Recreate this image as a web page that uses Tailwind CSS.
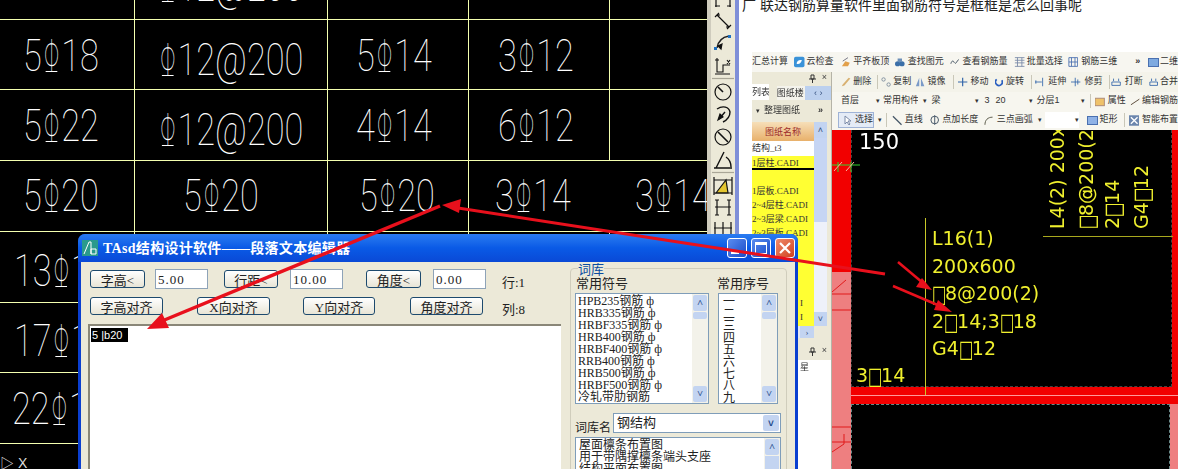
<!DOCTYPE html>
<html lang="zh">
  <head>
    <meta charset="UTF-8" />
    <meta name="viewport" content="width=device-width, initial-scale=1.0" />
    <title>TAsd</title>
    <script src="https://cdn.jsdelivr.net/npm/@tailwindcss/browser@4"></script>
  </head>
  <body class="bg-white">
    <div class="relative w-[1178px] h-[469px] overflow-hidden flex font-['Liberation_Sans','Noto_Sans_CJK_SC',sans-serif]">
      <!-- cad table -->
      <div id="cad" class="w-[707px] h-full shrink-0 overflow-hidden grid gap-px bg-[#f4ffb0] grid-cols-[134px_192px_140px_140px_97px] grid-rows-[19px_69px_70px_70px_70px_69px_70px_25px]"></div>

      <!-- dimension toolbar -->
      <div class="w-[28px] shrink-0 h-full bg-[#ece9d8] border-l-4 border-[#cfccbe] flex flex-col items-center text-black">
        <svg class="w-[24px] h-[240px]" viewBox="0 0 24 240" fill="none" stroke="#111" stroke-width="1.2">
          <path d="M5 0v7M19 0v7M4 6h5M16 6h4" />
          <path d="M4 17l4-4M16 29l4-4M6 15l12 12M6 15l3 0M18 27l-3 0" />
          <path d="M6 48c1-7 6-11 12-12" stroke="#222" stroke-width="1.5" /><rect x="3" y="47" width="3" height="3" fill="#1d6fc0" stroke="none" /><rect x="17" y="35" width="3" height="3" fill="#1d6fc0" stroke="none" /><path d="M11 44l-1 5-3-3z" fill="#111" />
          <path d="M6 58v14h6v-7h7M4 60h4M16 60l3 4M19 60l-3 4M4 74h15" stroke-width="1.1" />
          <path d="M1 78.5h22" stroke="#a9a697" />
          <circle cx="12" cy="92" r="8" /><path d="M12 92l-5-5" stroke-width="1.6" />
          <path d="M6 109c6-4 12-2 13 3 0 4-3 8-7 10M14 112l-6 7" stroke-width="1.4" /><path d="M7 120l2-6 3 3z" fill="#111" />
          <circle cx="12" cy="137" r="8" /><path d="M7 132l10 10" stroke-width="1.6" />
          <path d="M3 168h18M5 168l8-16M15 157c3 2 5 6 5 10" stroke-width="1.4" />
          <path d="M1 172.5h22" stroke="#a9a697" />
          <path d="M5 193l10-13 2 13z" fill="#e3c52f" /><path d="M3 177v18M21 177v18M3 180h18M3 193h18" />
          <path d="M6 200v15M18 200v15M4 207h16M4 200h4M16 200h4M4 215h4M16 215h4" />
          <path d="M4 222v14M12 222v14M20 222v14M3 228h18" />
        </svg>
      </div>
      <div class="w-[4px] shrink-0 h-full bg-[#7f8fd8]"></div>

      <!-- forum post + software screenshot -->
      <div class="flex-1 h-full flex flex-col min-w-0">
        <div class="h-[54px] shrink-0 pl-[3px] text-[14px] leading-[14px] text-[#222] -mt-[2px] whitespace-nowrap">广&nbsp;联达钢筋算量软件里面钢筋符号是框框是怎么回事呢</div>
        <div class="flex-1 ml-[13px] flex flex-col min-h-0 blur-[0.3px] text-[9px] text-[#333]">
          <!-- top toolbar -->
          <div class="h-[20px] shrink-0 bg-[#f7f6f0] flex items-center whitespace-nowrap overflow-hidden">
            <span>汇总计算</span>
            <svg class="ml-[6px] w-[12px] h-[12px]" viewBox="0 0 12 12"><rect width="12" height="12" rx="2" fill="#3a92d8" /><path d="M3 8c0-3 3-5 6-4-1 3-3 5-6 4z" fill="#fff" /></svg><span class="ml-[2px]">云检查</span>
            <svg class="ml-[7px] w-[11px] h-[12px]" viewBox="0 0 11 12"><path d="M1 11l4-6 5 2-2 4z" fill="#e2a04a" /><path d="M2 5l6-4" stroke="#667" /></svg><span class="ml-[3px]">平齐板顶</span>
            <svg class="ml-[6px] w-[11px] h-[12px]" viewBox="0 0 11 12"><circle cx="3" cy="8" r="3" fill="#3b6fa8" /><circle cx="8" cy="8" r="3" fill="#3b6fa8" /><path d="M3 2h5v4H3z" fill="#6b8fb8" /></svg><span class="ml-[3px]">查找图元</span>
            <svg class="ml-[6px] w-[11px] h-[8px]" viewBox="0 0 11 8" fill="none" stroke="#345"><path d="M1 6c1-4 3-4 4-1M6 6l4-5" /></svg><span class="ml-[3px]">查看钢筋量</span>
            <svg class="ml-[7px] w-[13px] h-[12px]" viewBox="0 0 13 12" fill="none" stroke="#7a8aa8"><path d="M1 1h11M1 4h11M1 7h11M1 11h11M4 1v10M9 1v10" /></svg><span class="ml-[1px]">批量选择</span>
            <svg class="ml-[5px] w-[12px] h-[12px]" viewBox="0 0 12 12" fill="none" stroke="#4a6fb0"><path d="M1 1h10v10H1zM4 1v10M8 1v10M1 6h10" /></svg><span class="ml-[3px]">钢筋三维</span>
            <span class="ml-[18px] font-bold">»</span>
            <span class="ml-[8px] w-[12px] h-[9px] bg-[#7eaae0] border border-[#4a70b0]"></span><span class="ml-[1px]">二维</span>
          </div>
          <div class="flex-1 flex min-h-0">
            <!-- drawing list panel -->
            <div class="w-[80px] shrink-0 h-full flex flex-col bg-[#ece9d8] border-r border-[#b5b3a7] relative">
              <div class="h-[12px] shrink-0 flex items-center justify-end gap-[6px] pr-[4px] text-[#444]">
                <svg class="w-[7px] h-[9px]" viewBox="0 0 7 9" fill="none" stroke="#333"><path d="M2 1h3v4H2zM0 5h7M3.500 5v4" /></svg><span>×</span>
              </div>
              <div class="h-[16px] shrink-0 flex items-end whitespace-nowrap">
                <span class="w-[17px] h-[16px] bg-white leading-[16px] overflow-hidden">列表</span>
                <span class="ml-[8px] w-[29px] h-[14px] bg-[#f4f3ec] leading-[14px] overflow-hidden">图纸楼</span>
                <span class="w-[26px] h-[14px] bg-[#bcd0ee] text-center leading-[14px] text-[#35507f]">‹ ›</span>
              </div>
              <div class="h-[22px] shrink-0 flex items-center whitespace-nowrap">
                <span class="ml-[4px] text-[7px]">▾</span><span class="ml-[4px]">整理图纸</span><span class="ml-[18px] font-bold">»</span>
              </div>
              <div class="h-[216px] shrink-0 flex">
                <div class="w-[62px] shrink-0 flex flex-col text-[9px] font-['Liberation_Serif','Noto_Sans_CJK_SC',serif] whitespace-nowrap overflow-hidden">
                  <div class="h-[19px] shrink-0 bg-gradient-to-b from-[#f6dfb8] to-[#e8b06a] text-center leading-[19px] text-[#9c2b2b] font-['Noto_Sans_CJK_SC',sans-serif]">图纸名称</div>
                  <div class="h-[15px] shrink-0 bg-white leading-[15px]">结构_t3</div>
                  <div class="h-[14px] shrink-0 bg-[#ffff33] leading-[14px] border-b-2 border-black">1层柱.CADI</div>
                  <div class="h-[14px] shrink-0 bg-[#ffff33]"></div>
                  <div class="flex-1 bg-[#ffff33] leading-[14px]">
                    <div class="h-[14px]">1层板.CADI</div>
                    <div class="h-[14px]">2~4层柱.CADI</div>
                    <div class="h-[14px]">2~3层梁.CADI</div>
                    <div class="h-[14px]">2~3层板.CADI</div>
                    <div class="h-[56px]"></div>
                    <div class="h-[14px] pl-[48px]">I</div>
                    <div class="h-[14px] pl-[48px]">I</div>
                  </div>
                  <div class="h-[12px] shrink-0 bg-[#e4e8f4] flex justify-end"><span class="w-[14px] bg-[#c3d4f1] text-center text-[#35507f] leading-[12px]">›</span></div>
                </div>
                <div class="w-[13px] shrink-0 flex flex-col bg-[#eef1fa] h-[204px]">
                  <div class="h-[16px] bg-[#c3d4f1] text-center text-[#35507f] leading-[16px]">˄</div>
                  <div class="h-[84px] bg-[#c6d5f4]"></div>
                  <div class="flex-1"></div>
                  <div class="h-[14px] bg-[#c3d4f1] text-center text-[#35507f] leading-[14px]">˅</div>
                </div>
              </div>
              <div class="flex-1 min-h-0 pt-[4px]">
                <div class="h-[18px] flex items-center justify-end gap-[6px] pr-[4px] text-[#444]">
                  <svg class="w-[7px] h-[9px]" viewBox="0 0 7 9" fill="none" stroke="#333"><path d="M2 1h3v4H2zM0 5h7M3.500 5v4" /></svg><span>×</span>
                </div>
                <div class="h-full bg-white pl-[48px] leading-[14px]">星</div>
              </div>
            </div>
            <!-- main area -->
            <div class="flex-1 min-w-0 flex flex-col">
              <div class="h-[20px] shrink-0 bg-[#f4f3ea] flex items-center whitespace-nowrap overflow-hidden">
                <svg class="ml-[9px] w-[12px] h-[12px]" viewBox="0 0 12 12"><path d="M1 11l3-1 7-8-2-1-7 8z" fill="#d8b070" /></svg><span class="ml-[2px]">删除</span><span class="ml-[6px] w-px h-[14px] bg-[#c9c7b8]"></span>
                <svg class="ml-[3px] w-[12px] h-[12px]" viewBox="0 0 12 12" fill="none" stroke="#789"><circle cx="3" cy="3" r="2" /><circle cx="9" cy="9" r="2" /></svg><span class="ml-[2px]">复制</span>
                <svg class="ml-[4px] w-[12px] h-[12px]" viewBox="0 0 12 12" fill="#7a9ac8"><path d="M5 1v10H1zM7 1v10h4z" /></svg><span class="ml-[2px]">镜像</span><span class="ml-[8px] w-px h-[14px] bg-[#c9c7b8]"></span>
                <svg class="ml-[4px] w-[11px] h-[12px]" viewBox="0 0 11 12" fill="none" stroke="#36a" stroke-width="1.4"><path d="M5.500 1v10M0 6h11" /></svg><span class="ml-[3px]">移动</span>
                <svg class="ml-[6px] w-[10px] h-[12px]" viewBox="0 0 10 12" fill="none" stroke="#2a5fc0" stroke-width="2"><path d="M2 3a4 4 0 1 0 6 1" /></svg><span class="ml-[3px]">旋转</span><span class="ml-[7px] w-px h-[14px] bg-[#c9c7b8]"></span>
                <svg class="ml-[3px] w-[11px] h-[12px]" viewBox="0 0 11 12" fill="none" stroke="#36a"><path d="M0 6h8M9 1v10M1 4v4" /></svg><span class="ml-[4px]">延伸</span>
                <svg class="ml-[5px] w-[11px] h-[12px]" viewBox="0 0 11 12" fill="none" stroke="#36a"><path d="M0 6h11M5 1v10M8 3v6" /></svg><span class="ml-[4px]">修剪</span><span class="ml-[6px] w-px h-[14px] bg-[#c9c7b8]"></span>
                <svg class="ml-[2px] w-[12px] h-[10px]" viewBox="0 0 12 10" fill="none" stroke="#36a"><path d="M1 5h10v4H1zM3 1v3M9 1v3" /></svg><span class="ml-[3px]">打断</span>
                <svg class="ml-[6px] w-[11px] h-[10px]" viewBox="0 0 11 10" fill="none" stroke="#36a"><path d="M1 5h9v4H1zM3 1v3M8 1v3" /></svg><span class="ml-[2px]">合并</span>
              </div>
              <div class="h-[18px] shrink-0 bg-[#f7f6ef] flex items-center whitespace-nowrap overflow-hidden">
                <span class="ml-[9px]">首层</span><span class="ml-[17px] text-[7px]">▾</span><span class="ml-[3px] w-[38px] overflow-hidden">常用构件类</span><span class="ml-[5px] text-[7px]">▾</span><span class="ml-[4px]">梁</span><span class="ml-[35px] text-[7px]">▾</span><span class="ml-[5px]">3</span><span class="ml-[6px]">20</span><span class="ml-[23px] text-[7px]">▾</span><span class="ml-[4px]">分层1</span><span class="ml-[21px] text-[7px]">▾</span><span class="ml-[5px] w-px h-[14px] bg-[#c9c7b8]"></span>
                <svg class="ml-[5px] w-[11px] h-[11px]" viewBox="0 0 11 11"><rect y="2" width="10" height="8" fill="#efc26a" stroke="#a87" /></svg><span class="ml-[2px]">属性</span>
                <svg class="ml-[4px] w-[11px] h-[11px]" viewBox="0 0 11 11" fill="none" stroke="#543"><path d="M1 9l9-6" /></svg><span class="ml-[2px]">编辑钢筋</span>
              </div>
              <div class="h-[20px] shrink-0 bg-[#f7f6ef] flex items-center whitespace-nowrap overflow-hidden">
                <span class="ml-[6px] w-[38px] h-[16px] border border-[#9fb3d6] bg-[#e4ebf6] flex items-center pl-[5px]"><svg class="w-[8px] h-[11px]" viewBox="0 0 8 11" fill="#fff" stroke="#7a8aa8"><path d="M1 1v8l2-2 2 3 1-1-2-3h3z" /></svg><span class="ml-[3px]">选择</span></span><span class="ml-[4px] text-[7px]">▾</span><span class="ml-[4px] w-px h-[14px] bg-[#c9c7b8]"></span>
                <svg class="ml-[5px] w-[11px] h-[11px]" viewBox="0 0 11 11" fill="none" stroke="#456" stroke-width="1.3"><path d="M1 1l9 9" /></svg><span class="ml-[2px]">直线</span>
                <svg class="ml-[6px] w-[12px] h-[12px]" viewBox="0 0 12 12" fill="none" stroke="#456"><circle cx="6" cy="6" r="4" /><path d="M6 1v10" /></svg><span class="ml-[2px]">点加长度</span>
                <svg class="ml-[6px] w-[10px] h-[11px]" viewBox="0 0 10 11" fill="none" stroke="#554"><path d="M1 10c0-5 3-8 8-8" /></svg><span class="ml-[3px]">三点画弧</span><span class="ml-[5px] text-[7px]">▾</span><span class="ml-[3px] w-[36px] h-[16px] bg-white text-right text-[7px] leading-[16px]">▾</span>
                <span class="ml-[8px] w-[11px] h-[9px] bg-[#8fb2e6] border border-[#4a70b0]"></span><span class="ml-[2px]">矩形</span><span class="ml-[6px] w-px h-[14px] bg-[#c9c7b8]"></span>
                <svg class="ml-[4px] w-[11px] h-[11px]" viewBox="0 0 11 11"><rect width="11" height="11" fill="#6c86ad" /><path d="M2 2l7 7M9 2L2 9" stroke="#fff" stroke-width="1.4" /></svg><span class="ml-[3px]">智能布置</span>
              </div>
              <!-- drawing canvas -->
              <div class="flex-1 relative bg-black overflow-hidden font-['DejaVu_Sans',sans-serif] text-[19px] leading-[27.5px] text-[#f0f02e] whitespace-nowrap">
                <div class="absolute left-0 top-0 w-[19px] h-[142px] bg-[#f20000]"></div>
                <div class="absolute left-0 top-[142px] w-[19px] h-[197px] bg-[#ee7f80]"></div>
                <div class="absolute right-0 top-0 w-[6px] h-[265px] bg-[#f20000]"></div>
                <div class="absolute right-0 top-[274px] w-[8px] h-[65px] bg-[#ee7f80]"></div>
                <div class="absolute left-[19px] right-0 top-[257px] h-[17px] bg-[#f20000]"></div>
                <div class="absolute left-[19px] right-0 top-[265px] h-px bg-[#ff9a9a]"></div>
                <div class="absolute left-[19px] right-[6px] top-0 h-[257px] border-x border-b border-dashed border-[#444]"></div>
                <div class="absolute left-[19px] right-[8px] top-[274px] h-[65px] border-x border-t border-dashed border-[#6a8a8a]"></div>
                <svg class="absolute left-0 top-[30px] w-[30px] h-[12px]" viewBox="0 0 30 12" fill="none"><path d="M0 5h28M6 2v10M19 2v10" stroke="#2fd42f" /><path d="M2 11l8-9M14 11l8-9" stroke="#ffb0a0" /></svg>
                <svg class="absolute left-0 top-[142px] w-[19px] h-[197px]" viewBox="0 0 19 197" fill="none" stroke="#e01b1b"><path d="M0 20L14 8M0 22h19M0 38h19M0 155h19M0 170h19M0 180l12-8M12 172v-10" /></svg>
                <div class="absolute left-[27px] top-0 text-[21px] leading-[24px] text-white">150</div>
                <div class="absolute left-[93px] top-[88px] w-px h-[177px] bg-[#c8c828]"></div>
                <div class="absolute left-[211px] top-[106px] w-[130px] h-px bg-[#a8a81e]"></div>
                <div class="absolute left-[100px] top-[95px]">
                  <div>L16(1)</div>
                  <div>200x600</div>
                  <div><span class="inline-block w-[13px] origin-left scale-x-[0.8] scale-y-125">□</span>8@200(2)</div>
                  <div>2<span class="inline-block w-[13px] origin-left scale-x-[0.8] scale-y-125">□</span>14;3<span class="inline-block w-[13px] origin-left scale-x-[0.8] scale-y-125">□</span>18</div>
                  <div>G4<span class="inline-block w-[13px] origin-left scale-x-[0.8] scale-y-125">□</span>12</div>
                </div>
                <div class="absolute left-[24px] top-[232px]">3<span class="inline-block w-[13px] origin-left scale-x-[0.8] scale-y-125">□</span>14</div>
                <div class="absolute left-[214px] top-[99px] h-[22px] leading-[22px] origin-top-left -rotate-90">L4(2) 200x</div>
                <div class="absolute left-[243px] top-[99px] h-[22px] leading-[22px] origin-top-left -rotate-90"><span class="inline-block w-[13px] origin-left scale-x-[0.8] scale-y-125">□</span>8@200(2)</div>
                <div class="absolute left-[269px] top-[99px] h-[22px] leading-[22px] origin-top-left -rotate-90">2<span class="inline-block w-[13px] origin-left scale-x-[0.8] scale-y-125">□</span>14</div>
                <div class="absolute left-[298px] top-[99px] h-[22px] leading-[22px] origin-top-left -rotate-90">G4<span class="inline-block w-[13px] origin-left scale-x-[0.8] scale-y-125">□</span>12</div>
              </div>
            </div>
          </div>
        </div>
      </div>

      <!-- TAsd dialog -->
      <div class="absolute left-[78px] top-[234px] w-[720px] h-[240px] rounded-t-[7px] bg-[#0a3fd0] p-[3px] pt-0 flex flex-col font-['Liberation_Serif','Noto_Sans_CJK_SC',serif] text-[13px] text-[#222]">
        <div class="h-[28px] shrink-0 -mx-[3px] rounded-t-[7px] bg-gradient-to-b from-[#2a7bf0] via-[#0a5ae6] to-[#0a49d6] flex items-center pl-[4px] pr-[3px]">
          <svg class="w-[16px] h-[16px] shrink-0" viewBox="0 0 16 16"><rect width="16" height="16" fill="#2a9a8c" /><path d="M2 14L7 2l2 0v12M9 9h5v5H9z" fill="none" stroke="#fff" /></svg>
          <span class="ml-[5px] text-[14px] font-bold text-white tracking-[0.3px] whitespace-nowrap">TAsd结构设计软件——段落文本编辑器</span>
          <div class="ml-auto flex gap-[4px]">
            <div class="w-[20px] h-[20px] rounded-[3px] border border-white bg-gradient-to-br from-[#5a8cf0] to-[#1a4ac8] flex items-end pl-[3px] pb-[3px]"><span class="w-[8px] h-[3px] bg-white"></span></div>
            <div class="w-[20px] h-[20px] rounded-[3px] border border-white bg-gradient-to-br from-[#5a8cf0] to-[#1a4ac8] flex items-center justify-center"><span class="w-[12px] h-[12px] border border-white border-t-[3px]"></span></div>
            <div class="w-[20px] h-[20px] rounded-[3px] border border-white bg-gradient-to-br from-[#ee8a6a] to-[#d0401c] flex items-center justify-center"><svg class="w-[14px] h-[14px]" viewBox="0 0 14 14" stroke="#fff" stroke-width="2.200"><path d="M2 2l10 10M12 2L2 12" /></svg></div>
          </div>
        </div>
        <div class="flex-1 bg-[#ece9d8] flex min-h-0">
          <!-- left: text editor -->
          <div class="w-[489px] shrink-0 flex flex-col pt-[8px] pl-[9px]">
            <div class="flex items-center h-[18px] whitespace-nowrap">
              <button class="w-[55px] h-[18px] rounded-[3px] border border-[#1d4a6e] bg-gradient-to-b from-white to-[#e8e5d6]">字高&lt;</button>
              <span class="ml-[10px] w-[53px] h-[20px] border border-[#8ea3b8] bg-white pl-[2px] leading-[20px] tracking-[1px]">5.00</span>
              <button class="ml-[16px] w-[54px] h-[18px] rounded-[3px] border border-[#1d4a6e] bg-gradient-to-b from-white to-[#e8e5d6]">行距&lt;</button>
              <span class="ml-[12px] w-[53px] h-[20px] border border-[#8ea3b8] bg-white pl-[2px] leading-[20px] tracking-[1px]">10.00</span>
              <button class="ml-[23px] w-[55px] h-[18px] rounded-[3px] border border-[#1d4a6e] bg-gradient-to-b from-white to-[#e8e5d6]">角度&lt;</button>
              <span class="ml-[12px] w-[53px] h-[20px] border border-[#8ea3b8] bg-white pl-[2px] leading-[20px] tracking-[1px]">0.00</span>
              <span class="ml-[16px] mt-[8px]">行:1</span>
            </div>
            <div class="flex items-center h-[18px] mt-[9px] whitespace-nowrap">
              <button class="w-[73px] h-[18px] rounded-[3px] border border-[#1d4a6e] bg-gradient-to-b from-white to-[#e8e5d6]">字高对齐</button>
              <button class="ml-[34px] w-[73px] h-[18px] rounded-[3px] border border-[#1d4a6e] bg-gradient-to-b from-white to-[#e8e5d6]">X向对齐</button>
              <button class="ml-[33px] w-[72px] h-[18px] rounded-[3px] border border-[#1d4a6e] bg-gradient-to-b from-white to-[#e8e5d6]">Y向对齐</button>
              <button class="ml-[35px] w-[73px] h-[18px] rounded-[3px] border border-[#1d4a6e] bg-gradient-to-b from-white to-[#e8e5d6]">角度对齐</button>
              <span class="ml-[19px] mt-[8px]">列:8</span>
            </div>
            <div class="flex-1 mt-[9px] -ml-[2px] w-[473px] bg-white border-l-2 border-t-2 border-[#8a8778] pl-[1px] pt-[2px]">
              <div class="w-[37px] h-[14px] bg-black text-[#fff] text-[11px] leading-[14px] pl-px whitespace-pre font-['Liberation_Sans',sans-serif]">5 |b20</div>
            </div>
          </div>
          <!-- right: word library -->
          <div class="w-[217px] h-[230px] mt-[6px] relative border border-[#d0cdbc] rounded-[4px]">
            <span class="absolute left-[7px] -top-[7px] bg-[#ece9d8] leading-[13px] text-[#0a4ca0] font-['Noto_Sans_CJK_SC',sans-serif]">词库</span>
            <div class="flex pl-[5px] pt-[6px] leading-[16px] font-['Noto_Sans_CJK_SC',sans-serif]">
              <span class="w-[141px]">常用符号</span><span>常用序号</span>
            </div>
            <div class="flex pl-[4px] mt-[2px]">
              <div class="w-[134px] h-[111px] bg-white border border-[#7f9db9] flex overflow-hidden">
                <div class="flex-1 pl-[2px] pt-px text-[12px] leading-[12px] whitespace-nowrap">
                  <div>HPB235钢筋 ф</div>
                  <div>HRB335钢筋 ф</div>
                  <div>HRBF335钢筋 ф</div>
                  <div>HRB400钢筋 ф</div>
                  <div>HRBF400钢筋 ф</div>
                  <div>RRB400钢筋 ф</div>
                  <div>HRB500钢筋 ф</div>
                  <div>HRBF500钢筋 ф</div>
                  <div>冷轧带肋钢筋</div>
                </div>
                <div class="w-[16px] shrink-0 bg-[#f3f2ea] flex flex-col p-px text-[#1f4a8a]">
                  <div class="h-[16px] bg-[#c3d4f1] rounded-[2px] text-center leading-[16px] text-[10px] font-bold">˄</div>
                  <div class="h-[7px] mt-px bg-[#c3d4f1] rounded-[2px]"></div>
                  <div class="flex-1"></div>
                  <div class="h-[16px] bg-[#c3d4f1] rounded-[2px] text-center leading-[16px] text-[10px] font-bold">˅</div>
                </div>
              </div>
              <div class="ml-[9px] w-[60px] h-[111px] bg-white border border-[#7f9db9] flex overflow-hidden">
                <div class="flex-1 pl-[4px] pt-px text-[12px] leading-[12px] font-['Noto_Sans_CJK_SC',sans-serif]">
                  <div>一</div><div>二</div><div>三</div><div>四</div><div>五</div><div>六</div><div>七</div><div>八</div><div>九</div>
                </div>
                <div class="w-[16px] shrink-0 bg-[#f3f2ea] flex flex-col p-px text-[#1f4a8a]">
                  <div class="h-[16px] bg-[#c3d4f1] rounded-[2px] text-center leading-[16px] text-[10px] font-bold">˄</div>
                  <div class="h-[7px] mt-px bg-[#c3d4f1] rounded-[2px]"></div>
                  <div class="flex-1"></div>
                  <div class="h-[16px] bg-[#c3d4f1] rounded-[2px] text-center leading-[16px] text-[10px] font-bold">˅</div>
                </div>
              </div>
            </div>
            <div class="flex items-end pl-[4px] mt-[8px] h-[21px] font-['Noto_Sans_CJK_SC',sans-serif] whitespace-nowrap">
              <span class="w-[38px] text-[12px] leading-[14px] -mb-[1px]">词库名</span>
              <div class="w-[168px] h-[20px] bg-white border border-[#7f9db9] flex items-center pl-[3px] leading-[16px]">
                <span class="flex-1 -mt-[3px]">钢结构</span>
                <span class="w-[16px] h-[16px] mr-px bg-[#c3d4f1] rounded-[2px] text-center text-[10px] font-bold text-[#1f4a8a]">˅</span>
              </div>
            </div>
            <div class="mt-[4px] ml-[4px] w-[206px] h-[60px] bg-white border border-[#7f9db9] flex overflow-hidden">
              <div class="flex-1 pl-[3px] text-[12px] leading-[12px] font-['Noto_Sans_CJK_SC',sans-serif] whitespace-nowrap">
                <div>屋面檩条布置图</div><div>用于带隅撑檩条端头支座</div><div>结构平面布置图</div>
              </div>
              <div class="w-[16px] shrink-0 bg-[#f3f2ea] flex flex-col p-px text-[#1f4a8a]">
                <div class="h-[16px] bg-[#c3d4f1] rounded-[2px] text-center leading-[16px] text-[10px] font-bold">˄</div>
                <div class="flex-1 mt-px bg-[#c3d4f1]"></div>
              </div>
            </div>
          </div>
        </div>
      </div>

      <!-- red annotation arrows, drawn over everything -->
      <svg class="absolute inset-0 w-[1178px] h-[469px] pointer-events-none" viewBox="0 0 1178 469" fill="none">
        <path d="M885 274L458 208" stroke="#e8101c" stroke-width="3" />
        <path d="M442 205l19-6-2 14z" fill="#e8101c" />
        <path d="M440 206L162 321" stroke="#e8101c" stroke-width="3.500" />
        <path d="M147 329l15-16 7 15z" fill="#e8101c" />
        <path d="M898 262L923 283" stroke="#e8101c" stroke-width="2.500" />
        <path d="M932 290l-16-3 6-9z" fill="#e8101c" />
        <path d="M893 286L940 306" stroke="#e8101c" stroke-width="2.500" />
        <path d="M952 312l-18-2 4-10z" fill="#e8101c" />
      </svg>
    </div>

    <script>
      // one entry per grid cell, left to right: [text, x offset, y offset]
      const cells = [
        ["", 0, 0], ["Φ12@200", 23, -29], ["", 0, 0], ["", 0, 0], ["", 0, 0],
        ["5Φ18", 23, 21], ["Φ12@200", 23, 25], ["5Φ14", 28, 21], ["3Φ12", 29, 21], ["", 0, 0],
        ["5Φ22", 23, 21], ["Φ12@200", 23, 25], ["4Φ14", 28, 21], ["6Φ12", 29, 21], ["", 0, 0],
        ["5Φ20", 23, 20], ["5Φ20", 48, 20], ["5Φ20", 31, 20], ["3Φ14", 26, 20],
        ["13Φ12", 14, 24], ["", 0, 0], ["", 0, 0], ["", 0, 0], ["", 0, 0],
        ["17Φ12", 14, 23], ["", 0, 0], ["", 0, 0], ["", 0, 0], ["", 0, 0],
        ["22Φ12", 12, 21], ["", 0, 0], ["", 0, 0], ["", 0, 0], ["", 0, 0],
        ["", 0, 0], ["", 0, 0], ["", 0, 0], ["", 0, 0], ["", 0, 0],
      ];

      function cadText(text, x, y) {
        const inner = text.replace(
          /Φ/g,
          '<span class="relative inline-block w-[25px] text-center"><span class="inline-block -mx-[5px] scale-x-[0.6]">Φ</span><span class="absolute left-[5px] bottom-0 w-[15px] h-px bg-white"></span></span>'
        );
        return `<span class="block w-max origin-left scale-x-[0.78] whitespace-nowrap font-['Roboto',sans-serif] font-thin text-[44px] leading-[31px] text-white" style="margin-left:${x}px;margin-top:${y}px">${inner}</span>`;
      }

      let html = "";
      cells.forEach((c, i) => {
        const wide = i === 18;
        html += `<div class="bg-black overflow-hidden ${wide ? "col-span-2 relative" : ""}">${c[0] ? cadText(c[0], c[1], c[2]) : ""}${wide ? `<span class="absolute left-[166px] top-0">${cadText("3Φ14", 0, 20)}</span>` : ""}</div>`;
      });
      document.getElementById("cad").innerHTML = html;
      // ucs icon in the last row
      document.getElementById("cad").children[34].innerHTML =
        '<span class="block pt-[14px] text-[14px] leading-[11px] text-[#ddd] whitespace-pre">▷ X</span>';
    </script>
  </body>
</html>
